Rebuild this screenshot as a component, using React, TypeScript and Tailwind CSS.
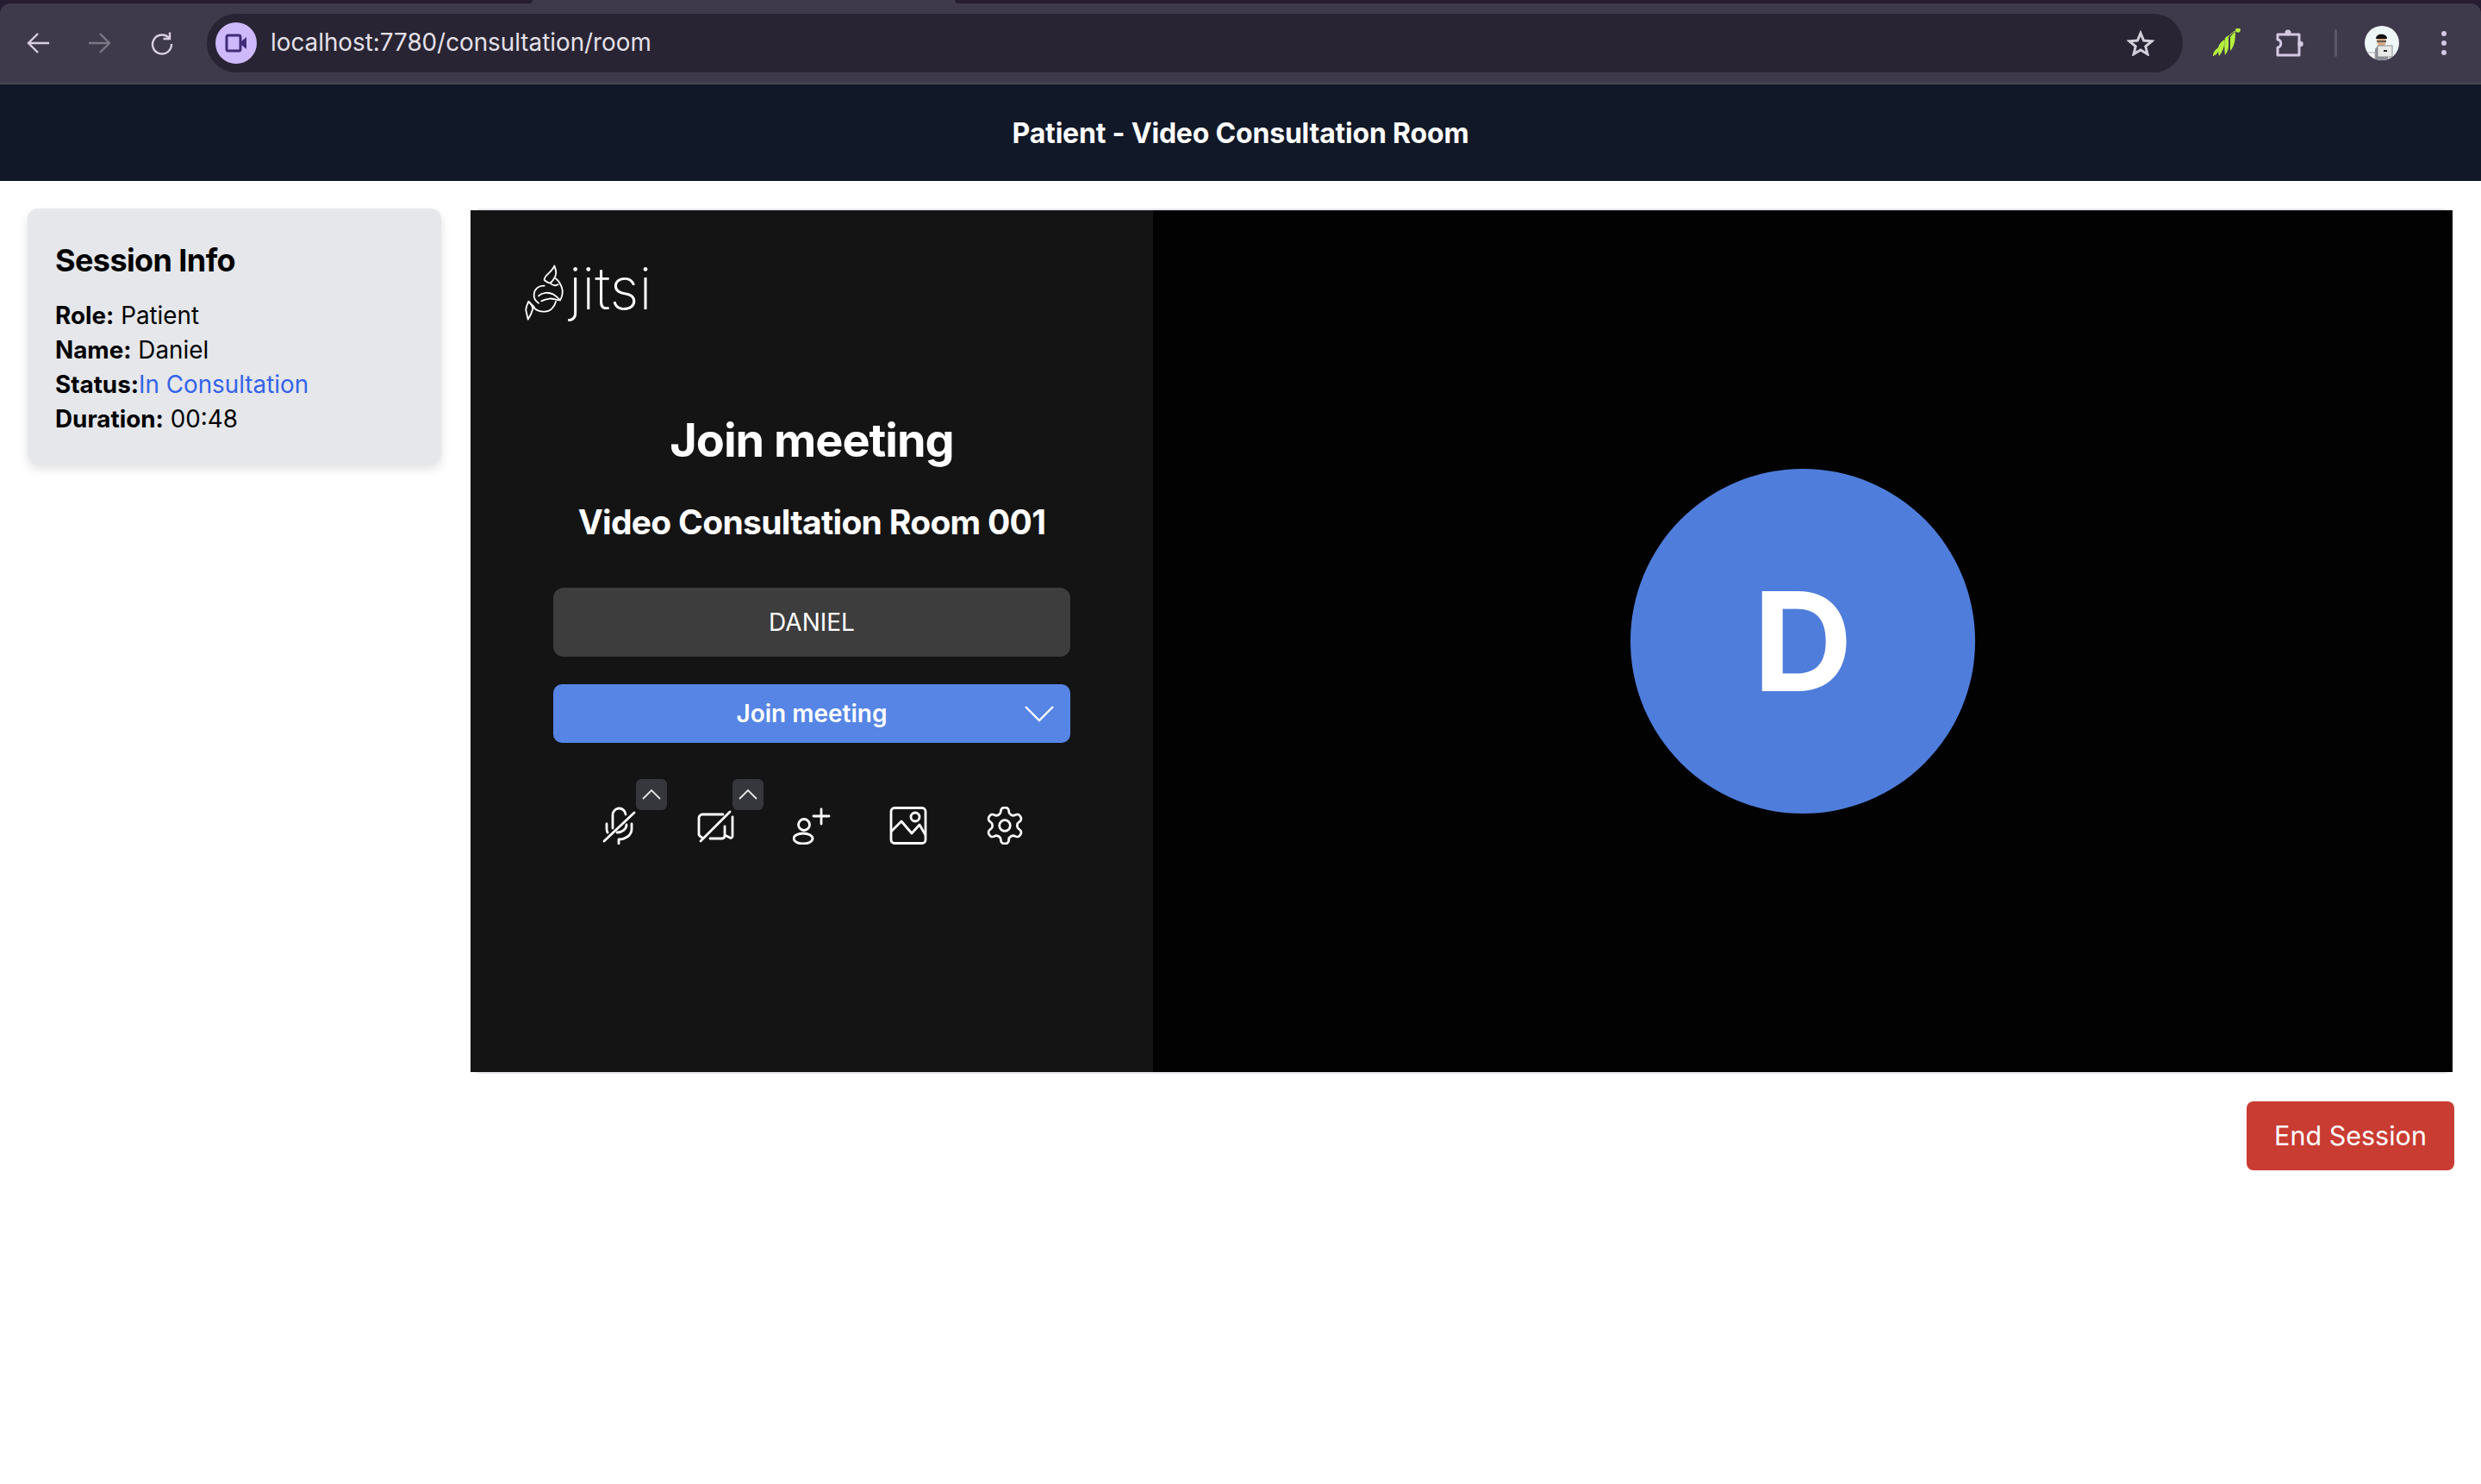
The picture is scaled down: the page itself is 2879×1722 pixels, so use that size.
const sans = { fontFamily: 'Inter, "Liberation Sans", sans-serif' };

function NavArrow({ color, flip }: { color: string; flip?: boolean }) {
  return (
    <svg width="28" height="26" viewBox="0 0 28 26" fill="none" stroke={color} strokeWidth="2.400" className={flip ? 'shrink-0 -scale-x-100' : 'shrink-0'}>
      <path d="M27 13H3M14 2L3 13l11 11" />
    </svg>
  );
}

function ReloadIcon() {
  return (
    <svg width="28" height="28" viewBox="0 0 28 28" fill="none" stroke="#d8d0e2" strokeWidth="2.400" className="shrink-0">
      <path d="M22.500 8.500A11 11 0 1 0 25 15" />
      <path d="M23 1.500V9h-7.500" />
    </svg>
  );
}

function ExtensionPuzzle() {
  return (
    <svg width="32" height="32" viewBox="0 0 32 32" fill="none" stroke="#d3c8e4" strokeWidth="3" strokeLinejoin="round">
      <path d="M2 6h25v24H2v-9c5 0 5-9 0-9Z" />
      <circle cx="14" cy="4" r="3.500" fill="#d3c8e4" stroke="none" />
      <circle cx="28.500" cy="17" r="3.200" fill="#d3c8e4" stroke="none" />
    </svg>
  );
}

function LeafExtension() {
  return (
    <svg width="34" height="34" viewBox="7 14 34 34" fill="#b5ef3f">
      <path d="M8 46c0-5 3-8 7-10l-1 5c-1 2-3 4-6 5Z" />
      <path d="M14 36c1-4 4-7 7-9 1 6-1 13-6 19-1-3-1-7-1-10Z" />
      <path d="M22 25l4-3v13c0 4-2 7-4 10-1-7-1-15 0-20Z" />
      <path d="M28 24c2-3 4-5 6-6 0 8-1 17-6 22Z" />
      <circle cx="37" cy="16" r="2.800" />
      <path d="M8 46C18 38 24 20 36 16" stroke="#b5ef3f" strokeWidth="1" fill="none" />
    </svg>
  );
}

function StarIcon() {
  return (
    <svg width="32" height="30" viewBox="0 0 32 30" fill="none" stroke="#d3cfd9" strokeWidth="3">
      <path d="M16 3.500l3.600 8.600 9.300.7-7.100 6 2.200 9-8-4.800-8 4.800 2.200-9-7.100-6 9.300-.7Z" />
    </svg>
  );
}

function Avatar() {
  return (
    <div className="w-10 h-10 rounded-full bg-[#eef6f8] overflow-hidden">
      <svg width="40" height="40" viewBox="0 0 40 40">
        <path d="M12 40V28c0-3 3-4 5-4h6c3 0 4 2 4 4v12Z" fill="#8b8f9c" />
        <circle cx="19.500" cy="18" r="5.500" fill="#d8a982" />
        <path d="M13 15c0-7 13-7 13 0Z" fill="#111" />
        <path d="M14 18h11" stroke="#444" strokeWidth="1.500" />
        <rect x="15" y="23" width="17" height="13" fill="#e7e9e8" stroke="#8a8a8a" strokeWidth="1" />
        <rect x="22" y="28" width="4" height="2" fill="#222" />
        <rect x="2" y="31" width="10" height="9" fill="#f7f7f7" stroke="#aaa" strokeWidth="1" />
      </svg>
    </div>
  );
}

function BrowserBar() {
  return (
    <div className="bg-[#261d33]">
      {/* tab strip: only the active tab reaches the top edge */}
      <div className="h-[4px] flex bg-[#3f3a4b]">
        <div className="w-[618px] bg-[#261d33] rounded-br-[4px]" />
        <div className="w-[490px]" />
        <div className="flex-1 bg-[#261d33] rounded-bl-[4px]" />
      </div>
      <div className="h-[92px] bg-[#3f3a4b] rounded-t-[12px] flex items-center pl-[30px] pr-[40px]">
        <NavArrow color="#d8d0e2" />
        <div className="w-[44px] shrink-0" />
        <NavArrow color="#7b7685" flip />
        <div className="w-[44px] shrink-0" />
        <ReloadIcon />
        <div className="w-[38px] shrink-0" />
        <div className="flex-1 h-[68px] rounded-full bg-[#282433] flex items-center pl-[10px] pr-[33px]">
          <div className="w-[48px] h-[48px] rounded-full bg-[#cdb9fb] flex items-center justify-center mr-[16px]">
            <svg width="26" height="24" viewBox="0 0 26 24">
              <rect x="2" y="3" width="16" height="18" rx="2" fill="#cdb9fb" stroke="#3f2c78" strokeWidth="3" />
              <path d="M19 10l6-5v14l-6-5Z" fill="#3f2c78" />
            </svg>
          </div>
          <span style={sans} className="flex-1 text-[27.800px] text-[#e4e0e9]">localhost:7780/consultation/room</span>
          <StarIcon />
        </div>
        <div className="ml-[34px] mr-[40px]"><LeafExtension /></div>
        <ExtensionPuzzle />
        <div className="w-[3px] h-[32px] bg-[#5c5768] rounded ml-[36px] mr-[32px]" />
        <Avatar />
        <div className="ml-[49px] flex flex-col gap-[5px]">
          <div className="w-[6px] h-[6px] rounded-full bg-[#d3c8e4]" />
          <div className="w-[6px] h-[6px] rounded-full bg-[#d3c8e4]" />
          <div className="w-[6px] h-[6px] rounded-full bg-[#d3c8e4]" />
        </div>
      </div>
      <div className="h-[2px] bg-[#4b4650]" />
    </div>
  );
}

function SessionInfo() {
  return (
    <div className="w-[480px] h-[296px] shrink-0 bg-[#e5e7eb] rounded-[12px] px-[32px] pt-[40px] shadow-[0_6px_12px_rgba(0,0,0,0.12)] text-black">
      <h2 className="text-[36px] leading-[40px] font-bold mb-[24px] tracking-[-0.6px]">Session Info</h2>
      <div className="text-[27.800px] leading-[40px]">
        <p><strong className="font-bold">Role:</strong> Patient</p>
        <p><strong className="font-bold">Name:</strong> Daniel</p>
        <p><strong className="font-bold">Status:</strong><span className="text-[#3563e9]">In Consultation</span></p>
        <p><strong className="font-bold">Duration:</strong> 00:48</p>
      </div>
    </div>
  );
}

function JitsiLogo() {
  return (
    <div className="flex items-start h-[80px]">
      <svg width="60" height="80" viewBox="0 0 180 240" fill="none" stroke="#fff" strokeWidth="5.500" strokeLinejoin="round" strokeLinecap="round">
        <path d="M130 25c-3 12-14 20-24 30-8 8-12 15-11 20 6 5 14 10 20 10 10-5 20-25 20-30 3-10-2-20-5-30Z" />
        <path d="M95 95c-20-2-35 12-36 30-1 14 6 24 16 30" />
        <path d="M135 70c10 8 20 25 23 40 1 14-2 25-8 35" />
        <path d="M115 85c8 8 18 12 28 5" />
        <path d="M75 130c12-12 35-14 50-6 10 6 18 14 25 21-12 2-24-8-38-5-12 2-20 4-27 8" />
        <path d="M135 150c-5 20-20 35-40 35-15 0-28-4-38-15" />
        <path d="M40 150c-6 12-12 24-8 35 2 10 5 20 6 27 8-12 14-25 17-37-2-10-8-20-15-25Z" />
        <path d="M40 150c6 6 14 12 20 20" />
      </svg>
      <span className="text-white text-[67px] leading-[76px] font-extralight -mt-[3px]">jitsi</span>
    </div>
  );
}

function ArrowBox() {
  return (
    <div className="absolute -top-[32px] left-[42px] w-[36px] h-[36px] rounded-[6px] bg-[#36373c] flex items-center justify-center">
      <svg width="24" height="14" viewBox="0 0 24 14" fill="none" stroke="#e8e8e8" strokeWidth="1.800">
        <path d="M2 12L12 2l10 10" />
      </svg>
    </div>
  );
}

function MicOff() {
  return (
    <svg width="44" height="44" viewBox="0 0 44 44" fill="none" stroke="#fff" strokeWidth="2.800" strokeLinecap="round">
      <path d="M15 25V10a7.500 7.500 0 0 1 15-1" />
      <path d="M8 20v6c0 1 .5 3 1 4M37 20v6c0 7-7 12-15 12M22 38v5" />
      <path d="M31 21c0 5-5 9-11 9" />
      <path d="M5 40L40 7" />
    </svg>
  );
}

function VideoOff() {
  return (
    <svg width="44" height="44" viewBox="0 0 44 44" fill="none" stroke="#fff" strokeWidth="2.800" strokeLinecap="round" strokeLinejoin="round">
      <path d="M7 36c-2-1-4-2-4-4V13c0-2 2-4 4-4h24" />
      <path d="M16 37h14c2 0 3-1 3-4l6 3c1 1 3 0 3-2V12M33 33V23" />
      <path d="M5 40L39 6" />
    </svg>
  );
}

function AddPerson() {
  return (
    <svg width="44" height="44" viewBox="0 0 44 44" fill="none" stroke="#fff" strokeWidth="2.800" strokeLinecap="round">
      <ellipse cx="13" cy="21" rx="6.500" ry="6.500" />
      <ellipse cx="12" cy="37" rx="11" ry="6" />
      <path d="M33 3v17M24 11h18" />
    </svg>
  );
}

function ImageIcon() {
  return (
    <svg width="44" height="44" viewBox="0 0 44 44" fill="none" stroke="#fff" strokeWidth="2.800" strokeLinejoin="round">
      <rect x="2" y="1.500" width="40" height="41" rx="4" />
      <circle cx="30" cy="12" r="5" />
      <path d="M2 29l12-12 12 14 9-10 7 12" />
    </svg>
  );
}

function GearIcon() {
  return (
    <svg width="44" height="44" viewBox="1.500 1.500 21 21" fill="none" stroke="#fff" strokeWidth="1.300" strokeLinejoin="round">
      <path d="M12.220 2h-.44a2 2 0 0 0-2 2v.18a2 2 0 0 1-1 1.730l-.43.250a2 2 0 0 1-2 0l-.15-.080a2 2 0 0 0-2.730.730l-.22.380a2 2 0 0 0 .730 2.730l.15.100a2 2 0 0 1 1 1.720v.510a2 2 0 0 1-1 1.740l-.15.090a2 2 0 0 0-.730 2.730l.22.380a2 2 0 0 0 2.730.730l.15-.080a2 2 0 0 1 2 0l.43.250a2 2 0 0 1 1 1.730V20a2 2 0 0 0 2 2h.44a2 2 0 0 0 2-2v-.18a2 2 0 0 1 1-1.730l.43-.250a2 2 0 0 1 2 0l.15.080a2 2 0 0 0 2.730-.730l.22-.390a2 2 0 0 0-.730-2.730l-.15-.080a2 2 0 0 1-1-1.740v-.500a2 2 0 0 1 1-1.740l.15-.090a2 2 0 0 0 .730-2.730l-.22-.380a2 2 0 0 0-2.730-.730l-.15.080a2 2 0 0 1-2 0l-.43-.250a2 2 0 0 1-1-1.730V4a2 2 0 0 0-2-2z" />
      <circle cx="12" cy="12" r="3" />
    </svg>
  );
}

function PrejoinPanel() {
  return (
    <div className="w-[792px] shrink-0 bg-[#141414] pt-[56px] flex flex-col text-white">
      <div className="pl-[54px]"><JitsiLogo /></div>
      <h1 className="text-center text-[54px] leading-[68px] font-bold mt-[97px] tracking-[-1px]">Join meeting</h1>
      <h2 className="text-center text-[39px] leading-[52px] font-bold mt-[35px] tracking-[-0.7px]">Video Consultation Room 001</h2>
      <div className="mx-[96px] mt-[50px] h-[80px] rounded-[12px] bg-[#3d3d3d] flex items-center justify-center text-[28px]">DANIEL</div>
      <div className="relative mx-[96px] mt-[32px] h-[68px] rounded-[10px] bg-[#5685e5] flex items-center justify-center text-[28px] font-semibold">
        Join meeting
        <svg className="absolute right-[18px] top-[24px]" width="36" height="20" viewBox="0 0 36 20" fill="none" stroke="#fff" strokeWidth="2.400">
          <path d="M2 2l16 16L34 2" />
        </svg>
      </div>
      <div className="flex justify-center gap-[68px] mt-[74px]">
        <div className="relative"><MicOff /><ArrowBox /></div>
        <div className="relative"><VideoOff /><ArrowBox /></div>
        <AddPerson />
        <ImageIcon />
        <GearIcon />
      </div>
    </div>
  );
}

function VideoFrame() {
  return (
    <div className="h-[1004px] bg-[#e5e7eb] rounded-[12px] pt-[2px]">
      <div className="flex h-[1000px]">
        <PrejoinPanel />
        <div className="flex-1 bg-[#020202] flex items-center justify-center">
          <div className="w-[400px] h-[400px] rounded-full bg-[#4f7ddb] flex items-center justify-center text-white text-[160px] font-bold">D</div>
        </div>
      </div>
    </div>
  );
}

export default function App() {
  return (
    <div style={sans} className="min-h-[1722px] bg-white">
      <BrowserBar />
      <header className="h-[112px] pt-[1px] bg-[#111827] flex items-center justify-center text-white text-[32px] font-bold tracking-[-0.2px]">
        Patient - Video Consultation Room
      </header>
      <main className="flex gap-[34px] pl-[32px] pr-[33px] pt-[32px]">
        <SessionInfo />
        <div className="flex-1 flex flex-col">
          <VideoFrame />
          <div className="flex justify-end mt-[32px] -mr-[2px]">
            <button className="w-[241px] h-[80px] rounded-[8px] bg-[#c93c32] text-white text-[30.500px]">End Session</button>
          </div>
        </div>
      </main>
    </div>
  );
}
